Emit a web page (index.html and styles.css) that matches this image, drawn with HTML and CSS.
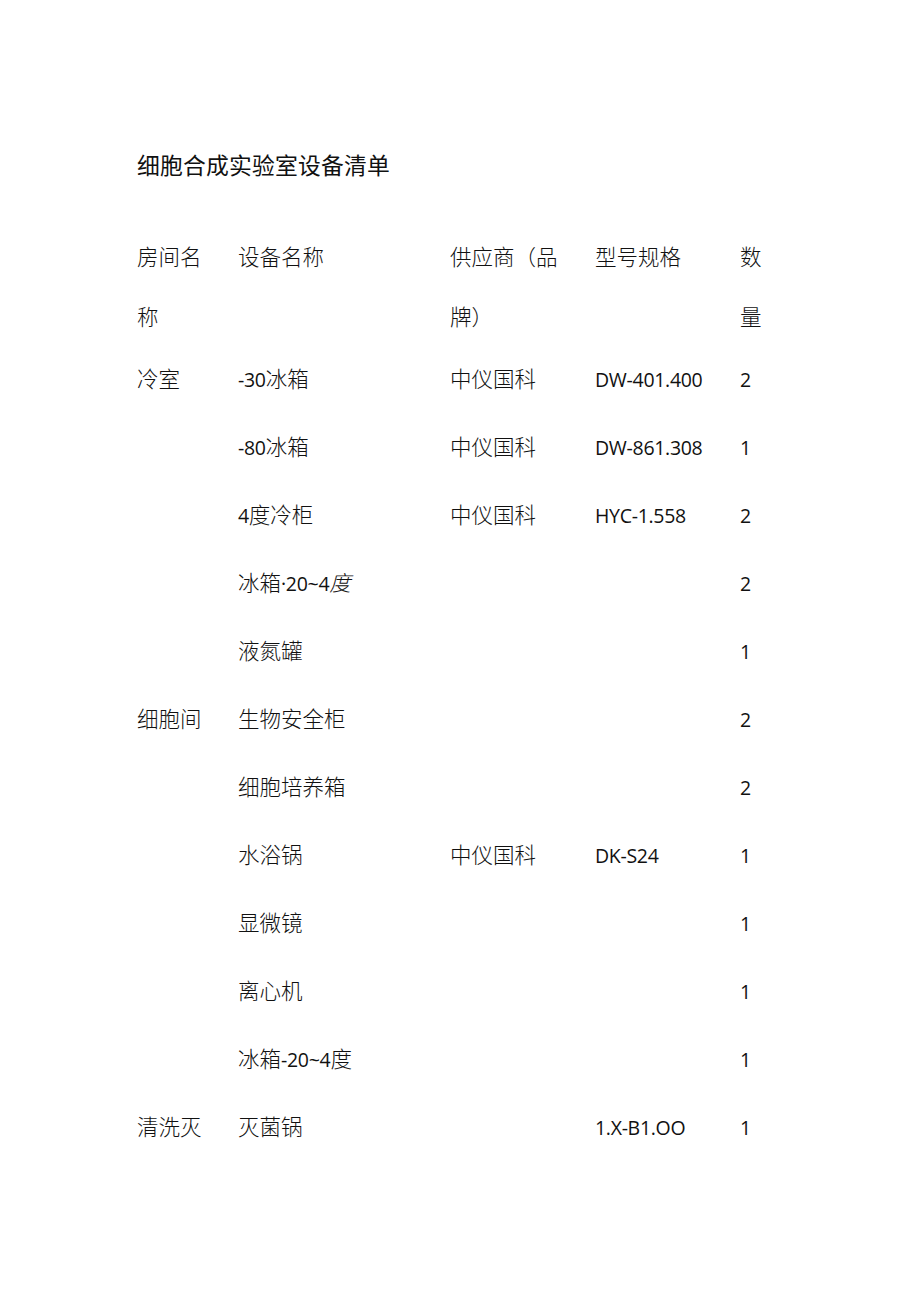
FILE: index.html
```html
<!DOCTYPE html>
<html lang="zh-CN">
<head>
<meta charset="utf-8">
<title>细胞合成实验室设备清单</title>
<link rel="stylesheet" href="styles.css">
</head>
<body>
<div class="page">
  <h1 class="title">细胞合成实验室设备清单</h1>
  <div class="table">
    <div class="row head">
      <div class="c1">房间名<br>称</div>
      <div class="c2">设备名称</div>
      <div class="c3">供应商（品<br>牌）</div>
      <div class="c4">型号规格</div>
      <div class="c5">数<br>量</div>
    </div>
    <div class="row">
      <div class="c1">冷室</div>
      <div class="c2"><span class="lat">-30</span>冰箱</div>
      <div class="c3">中仪国科</div>
      <div class="c4"><span class="lat">DW-401.400</span></div>
      <div class="c5"><span class="lat">2</span></div>
    </div>
    <div class="row">
      <div class="c1"></div>
      <div class="c2"><span class="lat">-80</span>冰箱</div>
      <div class="c3">中仪国科</div>
      <div class="c4"><span class="lat">DW-861.308</span></div>
      <div class="c5"><span class="lat">1</span></div>
    </div>
    <div class="row">
      <div class="c1"></div>
      <div class="c2"><span class="lat">4</span>度冷柜</div>
      <div class="c3">中仪国科</div>
      <div class="c4"><span class="lat">HYC-1.558</span></div>
      <div class="c5"><span class="lat">2</span></div>
    </div>
    <div class="row">
      <div class="c1"></div>
      <div class="c2">冰箱<span class="lat">·20~4</span><span class="ital">度</span></div>
      <div class="c3"></div>
      <div class="c4"></div>
      <div class="c5"><span class="lat">2</span></div>
    </div>
    <div class="row">
      <div class="c1"></div>
      <div class="c2">液氮罐</div>
      <div class="c3"></div>
      <div class="c4"></div>
      <div class="c5"><span class="lat">1</span></div>
    </div>
    <div class="row">
      <div class="c1">细胞间</div>
      <div class="c2">生物安全柜</div>
      <div class="c3"></div>
      <div class="c4"></div>
      <div class="c5"><span class="lat">2</span></div>
    </div>
    <div class="row">
      <div class="c1"></div>
      <div class="c2">细胞培养箱</div>
      <div class="c3"></div>
      <div class="c4"></div>
      <div class="c5"><span class="lat">2</span></div>
    </div>
    <div class="row">
      <div class="c1"></div>
      <div class="c2">水浴锅</div>
      <div class="c3">中仪国科</div>
      <div class="c4"><span class="lat">DK-S24</span></div>
      <div class="c5"><span class="lat">1</span></div>
    </div>
    <div class="row">
      <div class="c1"></div>
      <div class="c2">显微镜</div>
      <div class="c3"></div>
      <div class="c4"></div>
      <div class="c5"><span class="lat">1</span></div>
    </div>
    <div class="row">
      <div class="c1"></div>
      <div class="c2">离心机</div>
      <div class="c3"></div>
      <div class="c4"></div>
      <div class="c5"><span class="lat">1</span></div>
    </div>
    <div class="row">
      <div class="c1"></div>
      <div class="c2">冰箱<span class="lat">-20~4</span>度</div>
      <div class="c3"></div>
      <div class="c4"></div>
      <div class="c5"><span class="lat">1</span></div>
    </div>
    <div class="row">
      <div class="c1">清洗灭</div>
      <div class="c2">灭菌锅</div>
      <div class="c3"></div>
      <div class="c4"><span class="lat">1.X-B1.OO</span></div>
      <div class="c5"><span class="lat">1</span></div>
    </div>
  </div>
</div>
</body>
</html>
```

FILE: styles.css
```css
html, body {
  margin: 0;
  padding: 0;
  background: #ffffff;
}
body {
  color: #111111;
  font-family: "Noto Sans CJK SC", "Noto Sans", sans-serif;
}
.page {
  width: 920px;
  height: 1301px;
  box-sizing: border-box;
  padding: 145px 0 0 137px;
}
.title {
  margin: 0;
  font-size: 22.8px;
  font-weight: 400;
  line-height: 40px;
  letter-spacing: 0.2px;
  color: #111;
}
.table {
  margin-top: 41px;
  font-size: 21.5px;
  font-weight: 300;
}
.row {
  display: grid;
  grid-template-columns: 101px 212px 145px 145px 60px;
  grid-auto-rows: 68px;
  line-height: 68px;
  height: 68px;
  overflow: hidden;
  white-space: nowrap;
}
.row.head {
  line-height: 60px;
  height: 120px;
  grid-auto-rows: 120px;
  margin-bottom: -2px;
}
.lat {
  font-family: "Open Sans", "Noto Sans", sans-serif;
  font-size: 19.5px;
  font-weight: 400;
  letter-spacing: -0.3px;
  line-height: 1;
}
.ital {
  font-style: italic;
}
```
